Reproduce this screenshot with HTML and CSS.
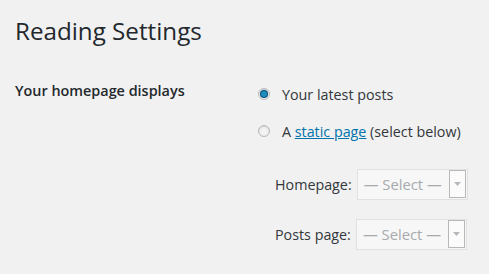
FILE: index.html
```html
<!DOCTYPE html>
<html>
<head>
<meta charset="utf-8">
<link rel="stylesheet" href="styles.css">
</head>
<body>
<div class="wrap">
  <h1 class="title">Reading Settings</h1>
  <div class="row">
    <div class="label">Your homepage displays</div>
    <div class="field">
      <label class="opt"><span class="radio checked"></span>Your latest posts</label>
      <label class="opt"><span class="radio"></span>A&nbsp;<a class="link" href="#">static page</a>&nbsp;(select below)</label>
      <div class="sub">
        <div class="subrow">
          <span class="sublabel">Homepage:</span>
          <span class="select"><span class="seltext">— Select —</span><span class="arrow"><svg width="7" height="4" viewBox="0 0 7 4"><path d="M0 0h7L3.5 4z" fill="#b4b9be"/></svg></span></span>
        </div>
        <div class="subrow">
          <span class="sublabel">Posts page:</span>
          <span class="select"><span class="seltext">— Select —</span><span class="arrow"><svg width="7" height="4" viewBox="0 0 7 4"><path d="M0 0h7L3.5 4z" fill="#b4b9be"/></svg></span></span>
        </div>
      </div>
    </div>
  </div>
</div>
</body>
</html>
```
FILE: styles.css
```css
html, body {
  margin: 0;
  padding: 0;
  background: #f1f1f1;
}
body {
  font-family: "Open Sans", "Noto Sans", sans-serif;
  color: #23282d;
  width: 489px;
  height: 274px;
  overflow: hidden;
}
.wrap {
  padding: 14px 0 0 15px;
}
.title {
  margin: 0;
  font-size: 24.2px;
  font-weight: 400;
  line-height: 34px;
  color: #23282d;
}
.row {
  display: flex;
  margin-top: 37px;
}
.label {
  width: 243px;
  font-size: 14.4px;
  font-weight: 600;
  line-height: 20px;
  margin-top: -4px;
}
.field {
  display: flex;
  flex-direction: column;
  font-size: 14.3px;
}
.opt {
  display: flex;
  align-items: center;
  height: 20px;
  margin-bottom: 16px;
  color: #32373c;
}
.opt:first-child {
  margin-top: -1px;
  margin-bottom: 17px;
}
.radio {
  width: 10px;
  height: 10px;
  border: 1px solid #b4b9be;
  border-radius: 50%;
  background: #f3f3f3;
  box-shadow: inset 0 1px 2px rgba(0,0,0,0.15);
  margin-right: 12px;
  display: flex;
  align-items: center;
  justify-content: center;
  flex: none;
}
.radio.checked::after {
  content: "";
  width: 6px;
  height: 6px;
  border-radius: 50%;
  background: #1e8cbe;
  box-shadow: 0 0 0 1px #0a4b78;
}
.link {
  color: #0073aa;
  text-decoration: underline;
}
.sub {
  padding-left: 17px;
  padding-top: 12px;
}
.subrow {
  display: flex;
  align-items: center;
  height: 30px;
  margin-bottom: 20px;
}
.sublabel {
  color: #32373c;
  margin-right: 5px;
}
.select {
  display: flex;
  align-items: center;
  width: 109px;
  height: 29px;
  border: 1px solid #e1e1e1;
  background: #f7f7f7;
}
.seltext {
  flex: 1;
  color: #a7aaad;
  font-size: 14.8px;
  padding-left: 6px;
  white-space: nowrap;
}
.arrow {
  width: 15px;
  height: 26px;
  border: 1px solid #b8b8b8;
  background: #fbfbfb;
  display: flex;
  align-items: center;
  justify-content: center;
  margin-right: 1px;
}
```
